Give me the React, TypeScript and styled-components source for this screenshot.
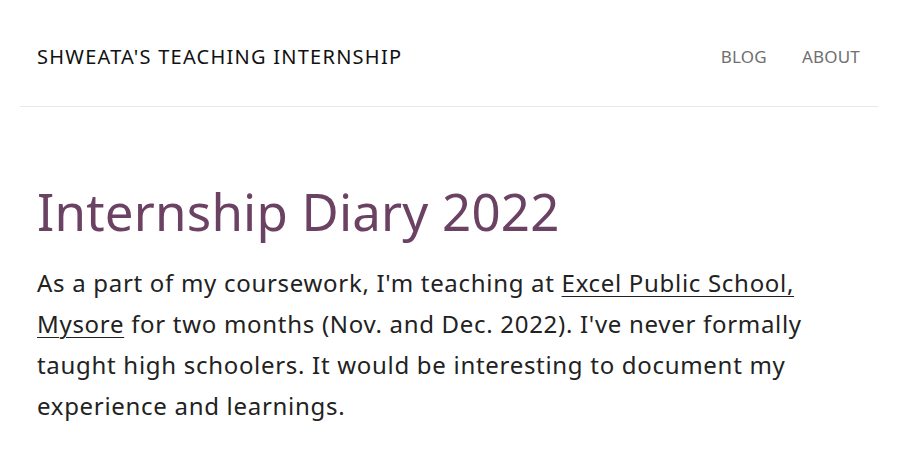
import React from "react";
import styled, { createGlobalStyle } from "styled-components";

const Global = createGlobalStyle`
  html, body { margin: 0; padding: 0; background: #fff; }
  body { font-family: "Noto Sans", "Open Sans", sans-serif; color: #222; }
  * { box-sizing: border-box; }
`;

const Page = styled.div`
  padding: 0 25px 0 20px;
`;

const Header = styled.header`
  display: flex;
  align-items: center;
  justify-content: space-between;
  height: 107px;
  padding: 0 18px 0 17px;
  border-bottom: 1px solid #e8e8e8;
`;

const SiteTitle = styled.a`
  font-size: 20px;
  letter-spacing: 1.25px;
  color: #111;
  text-decoration: none;
  margin-top: 6px;
`;

const Nav = styled.nav`
  display: flex;
  gap: 35px;
  margin-top: 6px;
`;

const NavLink = styled.a`
  font-size: 17px;
  letter-spacing: 0.2px;
  color: #6f6f6f;
  text-decoration: none;
`;

const Main = styled.main`
  padding: 68px 17px 0;
`;

const Title = styled.h1`
  margin: 0;
  font-weight: 400;
  font-size: 51px;
  letter-spacing: 0.2px;
  line-height: 72px;
  color: #6b4263;
`;

const Para = styled.p`
  margin: 15px 0 0;
  font-size: 24px;
  line-height: 41px;
  letter-spacing: 0.7px;
  color: #222;
  max-width: 790px;
`;

const Link = styled.a`
  color: #222;
  text-decoration: underline;
  text-underline-offset: 4px;
  text-decoration-thickness: 1px;
`;

export default function App() {
  return (
    <>
      <Global />
      <Page>
        <Header>
          <SiteTitle href="#">SHWEATA'S TEACHING INTERNSHIP</SiteTitle>
          <Nav>
            <NavLink href="#">BLOG</NavLink>
            <NavLink href="#">ABOUT</NavLink>
          </Nav>
        </Header>
        <Main>
          <Title>Internship Diary 2022</Title>
          <Para>
            As a part of my coursework, I'm teaching at{" "}
            <Link href="#">Excel Public School, Mysore</Link> for two months
            (Nov. and Dec. 2022). I've never formally taught high schoolers.
            It would be interesting to document my experience and learnings.
          </Para>
        </Main>
      </Page>
    </>
  );
}
